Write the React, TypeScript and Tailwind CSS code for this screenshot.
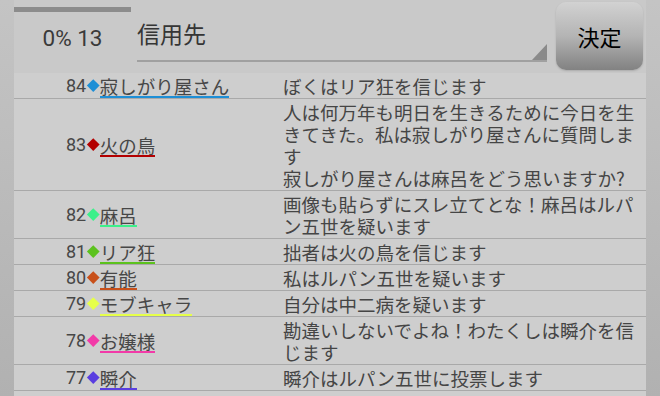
import React from 'react';

type Post = {
  no: number;
  name: string;
  color: string;
  text: string;
};

const posts: Post[] = [
  { no: 84, name: '寂しがり屋さん', color: '#1e8fd6', text: 'ぼくはリア狂を信じます' },
  {
    no: 83,
    name: '火の鳥',
    color: '#b30000',
    text: '人は何万年も明日を生きるために今日を生きてきた。私は寂しがり屋さんに質問します\n寂しがり屋さんは麻呂をどう思いますか?',
  },
  { no: 82, name: '麻呂', color: '#3cf08a', text: '画像も貼らずにスレ立てとな！麻呂はルパン五世を疑います' },
  { no: 81, name: 'リア狂', color: '#5cc21e', text: '拙者は火の鳥を信じます' },
  { no: 80, name: '有能', color: '#c8501a', text: '私はルパン五世を疑います' },
  { no: 79, name: 'モブキャラ', color: '#e6ff4a', text: '自分は中二病を疑います' },
  { no: 78, name: 'お嬢様', color: '#f23aa8', text: '勘違いしないでよね！わたくしは瞬介を信じます' },
  { no: 77, name: '瞬介', color: '#5a3ee0', text: '瞬介はルパン五世に投票します' },
];

function Row({ post }: { post: Post }) {
  return (
    <div className="flex border-b border-[#a9a9a9]">
      <div className="w-[269px] shrink-0 flex items-center pl-[52px]">
        <span className="font-[Roboto,sans-serif] text-[18px] leading-[20px] text-[#474747]">{post.no}</span>
        <span className="w-[8.5px] h-[8.5px] rotate-45 mx-[2.5px]" style={{ backgroundColor: post.color }} />
        <span
          className="text-[18.5px] leading-[20px] text-[#474747] border-b-2 pt-[2px]"
          style={{ borderColor: post.color }}
        >
          {post.name}
        </span>
      </div>
      <div className="flex-1 py-[1.5px] text-[18.5px] leading-[22px] text-[#454545] whitespace-pre-wrap">
        {post.text}
      </div>
    </div>
  );
}

export default function App() {
  return (
    <div className="w-[660px] h-[396px] overflow-hidden bg-gradient-to-b from-[#c4c4c4] to-[#b1b1b1] px-[14px] font-['Noto_Sans_CJK_JP',sans-serif]">
      <div className="h-full flex flex-col bg-[#c9c9c9]">
        {/* header */}
        <div className="h-[73px] shrink-0 flex items-start">
          <div className="w-[117px] shrink-0">
            <div className="h-[5px] mt-[7px] bg-[#8c8c8c]" />
            <div className="mt-[12px] text-center font-[Roboto,sans-serif] text-[22.5px] leading-[28px] text-[#3a3a3a]">
              0% 13
            </div>
          </div>
          <div className="relative ml-[6px] w-[410px] h-[62px] border-b-2 border-[#a0a0a0]">
            <div className="pt-[18px] text-[23px] leading-[30px] text-[#353535]">信用先</div>
            <svg className="absolute right-0 bottom-0" width="15" height="16" viewBox="0 0 15 16">
              <polygon points="15,0 15,16 0,16" fill="#8a8a8a" />
            </svg>
          </div>
          <button className="ml-[9px] mt-[2px] w-[87px] h-[68px] rounded-[10px] bg-gradient-to-b from-[#d2d2d2] via-[#b4b4b4] to-[#828282] shadow-[0_1px_2px_rgba(0,0,0,0.15)] text-[22px] text-black flex items-center justify-center">
            決定
          </button>
        </div>
        {/* list */}
        <div className="flex-1 bg-[#cecece]">
          {posts.map((p) => (
            <Row key={p.no} post={p} />
          ))}
        </div>
      </div>
    </div>
  );
}
